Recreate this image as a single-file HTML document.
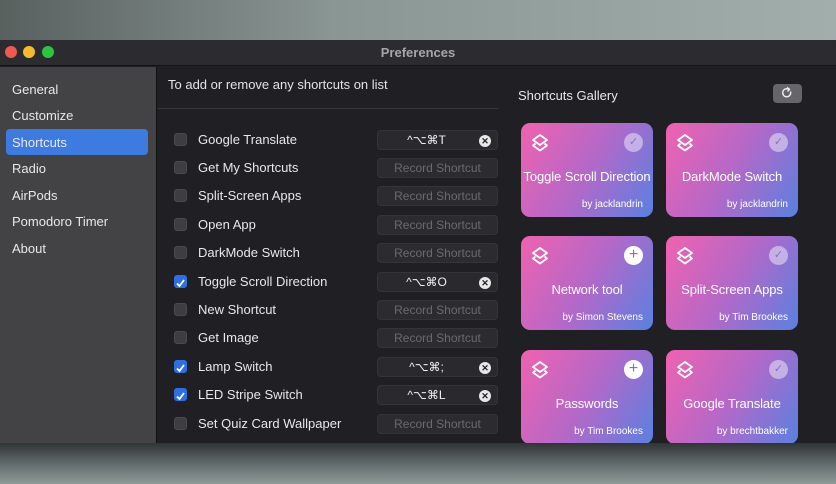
<!DOCTYPE html>
<html><head><style>
*{margin:0;padding:0;box-sizing:border-box}
body{width:836px;height:484px;overflow:hidden;position:relative;font-family:"Liberation Sans",sans-serif;background:#2a2c2e}
.top{position:absolute;left:0;top:0;width:836px;height:40px;background:linear-gradient(90deg,#59615f,#8a9694 40%,#a2aeac)}
.bot{position:absolute;left:0;top:443px;width:836px;height:41px;background:linear-gradient(180deg,#303435,#5d6667 45%,#8e9a98);}
.win{position:absolute;left:0;top:40px;width:836px;height:403px;background:#1f1f24;border-radius:8px 8px 0 0;overflow:hidden}
.title{position:absolute;left:0;top:0;width:836px;height:26px;background:#2c2c30;border-bottom:1px solid #141416;color:#a6a6a8;font-weight:bold;font-size:13px;text-align:center;line-height:25px}
.dot{position:absolute;top:6px;width:12px;height:12px;border-radius:50%}
.side{position:absolute;left:0;top:27px;width:157px;height:376px;background:#434346;border-right:1px solid #111}
.si{position:absolute;left:12px;font-size:13px;color:#e8e8ea}
.sel{position:absolute;left:6px;top:89px;width:142px;height:26px;background:#3e7be0;border-radius:4px}
.hdr{position:absolute;left:168px;top:37px;font-size:13px;color:#e4e4e6}
.div{position:absolute;left:158px;top:68px;width:340px;height:1px;background:#38383c}
.row{position:absolute;left:174px;height:20px;width:324px}
.cb{position:absolute;left:0;top:3px;width:13px;height:13px;border-radius:3px;background:#3e3e42;border:1px solid #4a4a4e}
.cb.on{background:#2f6fe0;border-color:#2f6fe0}
.lb{position:absolute;left:24px;top:2px;font-size:13px;color:#e8e8ea;white-space:nowrap}
.fd{position:absolute;left:203px;top:0;width:121px;height:20px;border-radius:4px;background:#2b2b30;border:1px solid #34343a;font-size:12px;color:#6a6a70;text-align:center;line-height:18px}
.fd.k{color:#f0f0f2;background:#29292e}
.fd.k span{margin-right:22px}
.x{position:absolute;right:6px;top:4px;width:12px;height:12px;border-radius:50%;background:#e8e8ea;color:#222;font-size:9px;line-height:12px;text-align:center;font-weight:bold}
.gt{position:absolute;left:518px;top:48px;font-size:13px;color:#e8e8ea}
.rf{position:absolute;left:773px;top:44px;width:29px;height:19px;border-radius:4px;background:#66666a}
.card{position:absolute;width:132px;height:94px;border-radius:9px;background:linear-gradient(120deg,#f062b0 0%,#b468c8 50%,#5a80e0 100%);color:#fff}
.card .t{position:absolute;left:0;width:132px;top:46px;text-align:center;font-size:13px;white-space:nowrap;letter-spacing:-0.1px}
.card .b{position:absolute;right:10px;bottom:7px;font-size:10px}
.card .ic{position:absolute;left:9px;top:10px}
.card .ck{position:absolute;right:10px;top:10px;width:19px;height:19px;border-radius:50%;background:rgba(255,255,255,.45);color:#8a70c8;font-size:11px;text-align:center;line-height:19px}
.card .pl{background:#fff;color:#a060c0;font-size:16px;line-height:18px}
</style></head><body>
<div class="top"></div><div class="bot"></div>
<div class="win">
<div class="title">Preferences
<div class="dot" style="left:5px;background:#ee5a52"></div>
<div class="dot" style="left:23px;background:#f5bd2e"></div>
<div class="dot" style="left:42px;background:#2dc540"></div>
</div>
<div class="side"></div>
<div class="sel"></div>
<div class="si" style="top:42px">General</div>
<div class="si" style="top:68px">Customize</div>
<div class="si" style="top:95px">Shortcuts</div>
<div class="si" style="top:121px">Radio</div>
<div class="si" style="top:148px">AirPods</div>
<div class="si" style="top:174px">Pomodoro Timer</div>
<div class="si" style="top:201px">About</div>
<div class="hdr">To add or remove any shortcuts on list</div>
<div class="div"></div>

<div class="row" style="top:90px"><div class="cb"></div><div class="lb">Google Translate</div><div class="fd k"><span>^⌥⌘T</span><div class="x">✕</div></div></div>
<div class="row" style="top:118px"><div class="cb"></div><div class="lb">Get My Shortcuts</div><div class="fd">Record Shortcut</div></div>
<div class="row" style="top:146px"><div class="cb"></div><div class="lb">Split-Screen Apps</div><div class="fd">Record Shortcut</div></div>
<div class="row" style="top:175px"><div class="cb"></div><div class="lb">Open App</div><div class="fd">Record Shortcut</div></div>
<div class="row" style="top:203px"><div class="cb"></div><div class="lb">DarkMode Switch</div><div class="fd">Record Shortcut</div></div>
<div class="row" style="top:232px"><div class="cb on"><svg width="11" height="11" viewBox="0 0 11 11"><path d="M2 5.5l2.5 2.5 4.5-6" stroke="#fff" stroke-width="1.8" fill="none"/></svg></div><div class="lb">Toggle Scroll Direction</div><div class="fd k"><span>^⌥⌘O</span><div class="x">✕</div></div></div>
<div class="row" style="top:260px"><div class="cb"></div><div class="lb">New Shortcut</div><div class="fd">Record Shortcut</div></div>
<div class="row" style="top:288px"><div class="cb"></div><div class="lb">Get Image</div><div class="fd">Record Shortcut</div></div>
<div class="row" style="top:317px"><div class="cb on"><svg width="11" height="11" viewBox="0 0 11 11"><path d="M2 5.5l2.5 2.5 4.5-6" stroke="#fff" stroke-width="1.8" fill="none"/></svg></div><div class="lb">Lamp Switch</div><div class="fd k"><span>^⌥⌘;</span><div class="x">✕</div></div></div>
<div class="row" style="top:345px"><div class="cb on"><svg width="11" height="11" viewBox="0 0 11 11"><path d="M2 5.5l2.5 2.5 4.5-6" stroke="#fff" stroke-width="1.8" fill="none"/></svg></div><div class="lb">LED Stripe Switch</div><div class="fd k"><span>^⌥⌘L</span><div class="x">✕</div></div></div>
<div class="row" style="top:374px"><div class="cb"></div><div class="lb">Set Quiz Card Wallpaper</div><div class="fd">Record Shortcut</div></div>

<div class="gt">Shortcuts Gallery</div>
<div class="rf"><svg width="29" height="19" viewBox="0 0 29 19"><path d="M17.5 7.5a4 4 0 1 1-2-2.3" stroke="#eee" stroke-width="1.4" fill="none"/><path d="M14 3.5l2.5 1.8-2 2.2" stroke="#eee" stroke-width="1.4" fill="none"/></svg></div>

<div class="card" style="left:521px;top:83px"><svg class="ic" width="20" height="20" viewBox="0 0 20 20"><path d="M10 2l7 5-7 5-7-5z M5.5 10.5L3 12.5l7 5 7-5-2.5-2" stroke="#fff" stroke-width="1.8" fill="none" stroke-linejoin="round"/></svg><div class="ck">✓</div><div class="t">Toggle Scroll Direction</div><div class="b">by jacklandrin</div></div>
<div class="card" style="left:666px;top:83px"><svg class="ic" width="20" height="20" viewBox="0 0 20 20"><path d="M10 2l7 5-7 5-7-5z M5.5 10.5L3 12.5l7 5 7-5-2.5-2" stroke="#fff" stroke-width="1.8" fill="none" stroke-linejoin="round"/></svg><div class="ck">✓</div><div class="t">DarkMode Switch</div><div class="b">by jacklandrin</div></div>
<div class="card" style="left:521px;top:196px"><svg class="ic" width="20" height="20" viewBox="0 0 20 20"><path d="M10 2l7 5-7 5-7-5z M5.5 10.5L3 12.5l7 5 7-5-2.5-2" stroke="#fff" stroke-width="1.8" fill="none" stroke-linejoin="round"/></svg><div class="ck pl">+</div><div class="t">Network tool</div><div class="b">by Simon Stevens</div></div>
<div class="card" style="left:666px;top:196px"><svg class="ic" width="20" height="20" viewBox="0 0 20 20"><path d="M10 2l7 5-7 5-7-5z M5.5 10.5L3 12.5l7 5 7-5-2.5-2" stroke="#fff" stroke-width="1.8" fill="none" stroke-linejoin="round"/></svg><div class="ck">✓</div><div class="t">Split-Screen Apps</div><div class="b">by Tim Brookes</div></div>
<div class="card" style="left:521px;top:310px"><svg class="ic" width="20" height="20" viewBox="0 0 20 20"><path d="M10 2l7 5-7 5-7-5z M5.5 10.5L3 12.5l7 5 7-5-2.5-2" stroke="#fff" stroke-width="1.8" fill="none" stroke-linejoin="round"/></svg><div class="ck pl">+</div><div class="t">Passwords</div><div class="b">by Tim Brookes</div></div>
<div class="card" style="left:666px;top:310px"><svg class="ic" width="20" height="20" viewBox="0 0 20 20"><path d="M10 2l7 5-7 5-7-5z M5.5 10.5L3 12.5l7 5 7-5-2.5-2" stroke="#fff" stroke-width="1.8" fill="none" stroke-linejoin="round"/></svg><div class="ck">✓</div><div class="t">Google Translate</div><div class="b">by brechtbakker</div></div>
</div>
</body></html>
